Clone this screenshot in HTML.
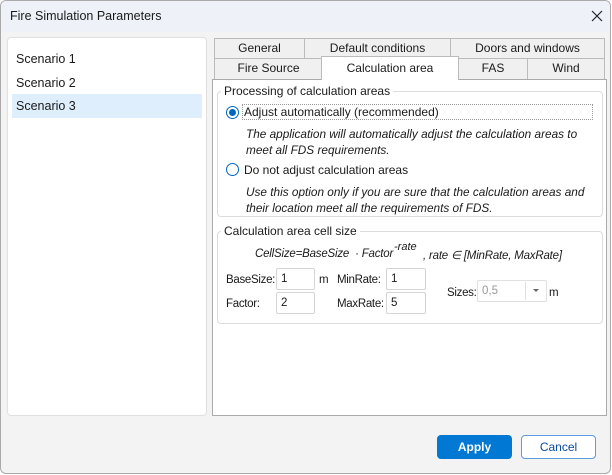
<!DOCTYPE html>
<html><head><style>
*{box-sizing:border-box;margin:0;padding:0}
body{width:612px;height:475px;overflow:hidden;background:#fff;font-family:"Liberation Sans",sans-serif;font-size:11.5px;color:#1a1a1a;position:relative}
.win{position:absolute;left:0;top:0;width:611px;height:474px;background:#f3f3f3;border:1px solid #aaa;border-radius:6px;overflow:hidden}
.title{position:absolute;left:0;top:0;right:0;height:31px;background:#eef2f8}
.abs{position:absolute;white-space:nowrap}
.tab{position:absolute;background:#f0f0f0;border:1px solid #bbb;text-align:center;line-height:18px;font-size:12px}
.grp{position:absolute;border:1px solid #dcdcdc;border-radius:4px}
.leg{position:absolute;background:#fff;padding:0 3px;font-size:12px}
.i{font-style:italic;font-size:11.8px}
.inp{position:absolute;background:#fff;border:1px solid #d5d5d5;border-radius:2px;padding-left:4px;line-height:20px}
.rad{position:absolute;width:13px;height:13px;border-radius:50%;border:1px solid #0067c0;background:#fff}
.l{letter-spacing:-0.3px}
</style></head><body>
<div class="win">
<div class="title"></div>
<div class="abs" style="left:9px;top:8px;font-size:12.5px">Fire Simulation Parameters</div>
<svg class="abs" style="left:590px;top:9px" width="12" height="12"><path d="M1 1L11 11M11 1L1 11" stroke="#222" stroke-width="1.2"/></svg>

<div class="abs" style="left:6px;top:36px;width:200px;height:379px;background:#fff;border:1px solid #e0e0e0;border-radius:4px"></div>
<div class="abs" style="left:15px;top:51px;font-size:12.5px">Scenario 1</div>
<div class="abs" style="left:15px;top:75px;font-size:12.5px">Scenario 2</div>
<div class="abs" style="left:11px;top:93px;width:190px;height:24px;background:#dfeefc"></div>
<div class="abs" style="left:15px;top:98px;font-size:12.5px">Scenario 3</div>

<div class="tab" style="left:213px;top:37px;width:91px;height:21px">General</div>
<div class="tab" style="left:303px;top:37px;width:147px;height:21px">Default conditions</div>
<div class="tab" style="left:449px;top:37px;width:155px;height:21px">Doors and windows</div>
<div class="tab" style="left:213px;top:57px;width:109px;height:22px">Fire Source</div>
<div class="tab" style="left:457px;top:57px;width:70px;height:22px">FAS</div>
<div class="tab" style="left:526px;top:57px;width:78px;height:22px">Wind</div>
<div class="abs" style="left:211px;top:78px;width:395px;height:337px;background:#fff;border:1px solid #aaa"></div>
<div class="tab" style="left:320px;top:55px;width:138px;height:24px;background:#fff;border-bottom:none;line-height:22px">Calculation area</div>

<div class="grp" style="left:216px;top:90px;width:386px;height:126px"></div>
<div class="leg" style="left:220px;top:83px">Processing of calculation areas</div>
<div class="rad" style="left:225px;top:105px"><div style="position:absolute;left:2px;top:2px;width:7px;height:7px;border-radius:50%;background:#0067c0"></div></div>
<div class="abs" style="left:241px;top:103px;width:351px;height:16px;border:1px dotted #999"></div>
<div class="abs" style="left:243px;top:104px;font-size:12px">Adjust automatically (recommended)</div>
<div class="abs i" style="left:245px;top:126px">The application will automatically adjust the calculation areas to</div>
<div class="abs i" style="left:245px;top:142px">meet all FDS requirements.</div>
<div class="rad" style="left:225px;top:162px"></div>
<div class="abs" style="left:243px;top:162px;font-size:12px">Do not adjust calculation areas</div>
<div class="abs i" style="left:245px;top:184px">Use this option only if you are sure that the calculation areas and</div>
<div class="abs i" style="left:245px;top:200px">their location meet all the requirements of FDS.</div>

<div class="grp" style="left:216px;top:230px;width:386px;height:93px"></div>
<div class="leg" style="left:220px;top:223px">Calculation area cell size</div>
<div class="abs i" style="left:254px;top:247px;font-size:11.5px;letter-spacing:-0.2px">CellSize=BaseSize &nbsp;· Factor</div>
<div class="abs i" style="left:393px;top:240px;font-size:11px">-rate</div>
<div class="abs i" style="left:422px;top:247px;font-size:11.5px;letter-spacing:-0.2px">, rate ∈ [MinRate, MaxRate]</div>
<div class="abs l" style="left:225px;top:273px">BaseSize:</div>
<div class="inp" style="left:275px;top:267px;width:39px;height:22px">1</div>
<div class="abs" style="left:318px;top:273px">m</div>
<div class="abs l" style="left:336px;top:273px">MinRate:</div>
<div class="inp" style="left:385px;top:267px;width:40px;height:22px">1</div>
<div class="abs l" style="left:225px;top:297px">Factor:</div>
<div class="inp" style="left:275px;top:291px;width:39px;height:22px">2</div>
<div class="abs l" style="left:336px;top:297px">MaxRate:</div>
<div class="inp" style="left:385px;top:291px;width:40px;height:22px">5</div>
<div class="abs l" style="left:446px;top:286px">Sizes:</div>
<div class="inp" style="left:476px;top:279px;width:70px;height:22px;color:#999;border-color:#e0e0e0">0,5</div>
<div class="abs" style="left:524px;top:281px;width:1px;height:18px;background:#e0e0e0"></div>
<div class="abs" style="left:532px;top:288px;width:0;height:0;border-left:3px solid transparent;border-right:3px solid transparent;border-top:3px solid #666"></div>
<div class="abs" style="left:548px;top:286px">m</div>

<div class="abs" style="left:436px;top:434px;width:75px;height:24px;background:#0078d4;border-radius:4px;color:#fff;font-weight:bold;text-align:center;line-height:24px;font-size:12px">Apply</div>
<div class="abs" style="left:520px;top:434px;width:75px;height:24px;background:#fff;border:1px solid #5b9be0;border-radius:4px;color:#0a4aa0;text-align:center;line-height:22px;font-size:12px">Cancel</div>
</div>
</body></html>
